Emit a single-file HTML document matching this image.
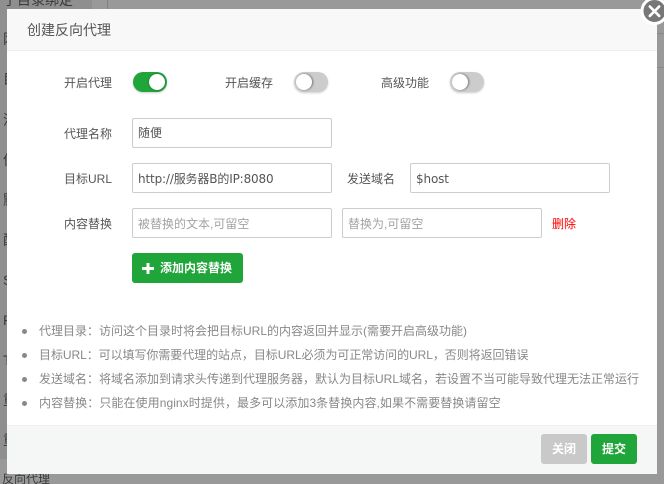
<!DOCTYPE html>
<html lang="zh">
<head>
<meta charset="utf-8">
<title>创建反向代理</title>
<style>
html,body{margin:0;padding:0;width:664px;height:484px;overflow:hidden;background:#999;}
*{box-sizing:border-box;}
body{position:relative;font-family:"Liberation Sans","Noto Sans CJK SC",sans-serif;font-size:12px;color:#555;}
.a{position:absolute;white-space:nowrap;}
.bg{color:#3a3a3a;font-size:14px;line-height:20px;}
.modal{position:absolute;left:7px;top:9px;width:650px;height:465px;background:#fff;}
.head{position:absolute;left:0;top:0;width:650px;height:42px;background:#f8f8f8;border-bottom:1px solid #eee;}
.foot{position:absolute;left:0;top:416px;width:650px;height:49px;background:#f5f6f6;border-top:1px solid #eee;}
.label{position:absolute;line-height:20px;text-align:right;color:#555;white-space:nowrap;font-size:12px;}
.input{position:absolute;width:200px;height:30px;border:1px solid #ccc;border-radius:2px;line-height:30px;padding-left:5px;color:#555;background:#fff;white-space:nowrap;font-size:12px;}
.dj{font-family:"DejaVu Sans","Noto Sans CJK SC",sans-serif;letter-spacing:-.15px;}
.ph{color:#a3a3a3;}
.sw{position:absolute;width:34px;height:20px;border-radius:10px;background:#ccc;box-shadow:0 1px 2px rgba(0,0,0,.2);}
.sw i{position:absolute;top:2px;width:16px;height:16px;border-radius:50%;background:#fff;box-shadow:0 0 2px rgba(0,0,0,.35);}
.on{background:#20a53a;}
.on i{left:16px;}
.off i{left:2px;box-shadow:1px 0 2px rgba(0,0,0,.45);}
.btn{position:absolute;border-radius:3px;color:#fff;text-align:center;font-weight:bold;font-size:12px;}
.tip{position:absolute;left:32px;color:#888;font-size:12px;line-height:20px;white-space:nowrap;}
.dot{position:absolute;left:15px;width:5px;height:5px;border-radius:50%;background:#888;}
</style>
</head>
<body>
<div class="a" style="left:0;top:0;width:92px;height:459px;background:#8f8f8f"></div>
<div class="a" style="left:107px;top:0;width:1px;height:9px;background:#808080"></div>
<div class="a" style="left:657px;top:33px;width:7px;height:1px;background:#888"></div>
<div class="a" style="left:657px;top:67px;width:7px;height:1px;background:#888"></div>
<div class="a bg" style="left:3px;top:-10px">了目录绑定</div>
<div class="a bg" style="left:3px;top:29px">网</div>
<div class="a bg" style="left:3px;top:69px">目</div>
<div class="a bg" style="left:3px;top:110px">流</div>
<div class="a bg" style="left:3px;top:150px">伪</div>
<div class="a bg" style="left:3px;top:190px">默</div>
<div class="a bg" style="left:3px;top:230px">配</div>
<div class="a bg" style="left:3px;top:270px">S</div>
<div class="a bg" style="left:3px;top:310px">P</div>
<div class="a bg" style="left:3px;top:350px">T</div>
<div class="a bg" style="left:3px;top:390px">重</div>
<div class="a bg" style="left:3px;top:430px">重</div>
<div class="a bg" style="left:2px;top:469px;font-size:12px">反向代理</div>

<div class="modal">
  <div class="head"></div>
  <div class="a" style="left:20px;top:11px;font-size:14px;line-height:20px;color:#555">创建反向代理</div>
  <div class="foot"></div>

  <div class="label" style="left:57px;top:64px">开启代理</div>
  <div class="sw on" style="left:126px;top:63px"><i></i></div>
  <div class="label" style="left:218px;top:64px">开启缓存</div>
  <div class="sw off" style="left:287px;top:63px"><i></i></div>
  <div class="label" style="left:374px;top:64px">高级功能</div>
  <div class="sw off" style="left:443px;top:63px"><i></i></div>

  <div class="label" style="left:57px;top:115px">代理名称</div>
  <div class="input" style="left:125px;top:109px;font-size:12px;line-height:29px">随便</div>

  <div class="label" style="left:57px;top:160px">目标URL</div>
  <div class="input dj" style="left:125px;top:154px">http://服务器B的IP:8080</div>
  <div class="label" style="left:340px;top:160px">发送域名</div>
  <div class="input dj" style="left:403px;top:154px">$host</div>

  <div class="label" style="left:57px;top:205px">内容替换</div>
  <div class="input ph" style="left:125px;top:199px;color:#a3a3a3">被替换的文本,可留空</div>
  <div class="input ph" style="left:335px;top:199px;color:#a3a3a3">替换为,可留空</div>
  <div class="a" style="left:545px;top:205px;line-height:20px;color:#f00">删除</div>

  <div class="btn" style="left:125px;top:244px;width:111px;height:30px;background:#20a53a;line-height:30px;padding-left:28px;text-align:left">添加内容替换</div>
  <svg class="a" style="left:135px;top:254px" width="12" height="11" viewBox="0 0 12 11"><path d="M4.500 0h3v4h4.500v3h-4.500v4h-3v-4h-4.500v-3h4.500z" fill="#fff"/></svg>

  <div class="dot" style="top:319.500px"></div>
  <div class="tip" style="top:312px">代理目录：访问这个目录时将会把目标URL的内容返回并显示(需要开启高级功能)</div>
  <div class="dot" style="top:343.500px"></div>
  <div class="tip" style="top:336px;letter-spacing:-.06px">目标URL：可以填写你需要代理的站点，目标URL必须为可正常访问的URL，否则将返回错误</div>
  <div class="dot" style="top:367.500px"></div>
  <div class="tip" style="top:360px">发送域名：将域名添加到请求头传递到代理服务器，默认为目标URL域名，若设置不当可能导致代理无法正常运行</div>
  <div class="dot" style="top:391.500px"></div>
  <div class="tip" style="top:384px;letter-spacing:.07px">内容替换：只能在使用nginx时提供，最多可以添加3条替换内容,如果不需要替换请留空</div>

  <div class="btn" style="left:534px;top:425px;width:46px;height:30px;background:#c9c9c9;line-height:30px">关闭</div>
  <div class="btn" style="left:584px;top:425px;width:46px;height:30px;background:#20a53a;line-height:30px">提交</div>
</div>

<svg class="a" style="left:640px;top:-3px" width="28" height="28" viewBox="0 0 28 28">
  <circle cx="14.500" cy="14" r="12.500" fill="#777" stroke="#fff" stroke-width="3"/>
  <path d="M9.800 9.500L19.200 18.900M19.200 9.500L9.800 18.900" stroke="#fff" stroke-width="2.600" stroke-linecap="round" fill="none"/>
</svg>
</body>
</html>
